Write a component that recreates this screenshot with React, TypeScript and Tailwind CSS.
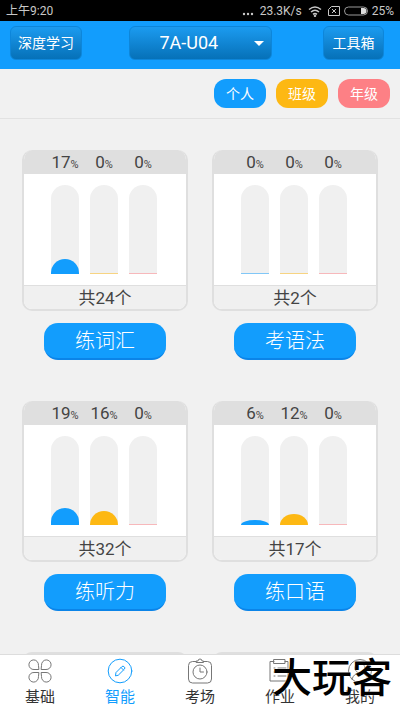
import React from "react";

type Card = { title: string; count: number; values: number[] };

const cards: Card[] = [
  { title: "练词汇", count: 24, values: [17, 0, 0] },
  { title: "考语法", count: 2, values: [0, 0, 0] },
  { title: "练听力", count: 32, values: [19, 16, 0] },
  { title: "练口语", count: 17, values: [6, 12, 0] },
];

const fills = ["bg-[#129dfd]", "bg-[#fdb813]", "bg-[#fd8085]"];
const headerButton =
  "h-[34px] rounded-md border border-[#0d86da] bg-linear-to-b from-[#1b9bf0] to-[#0671b8] text-white";

function Bar({ value, fill }: { value: number; fill: string }) {
  const height = Math.max(1, Math.round(value * 0.89));
  return (
    <div className="flex h-[89px] w-7 items-end overflow-hidden rounded-t-full bg-[#f0f0f0]">
      <div
        className={`w-full ${fill} ${value === 0 ? "opacity-50" : ""}`}
        style={{
          height,
          borderRadius: value === 0 ? 0 : `14px 14px 0 0 / ${Math.min(height, 14)}px ${Math.min(height, 14)}px 0 0`,
        }}
      />
    </div>
  );
}

function StatCard({ card }: { card: Card }) {
  return (
    <section className="flex flex-col items-center">
      <div className="w-full overflow-hidden rounded-[10px] border-2 border-t-0 border-[#dfdfdf] bg-white">
        <div className="flex h-6 justify-center gap-[11px] bg-[#dfdfdf] pr-0.5">
          {card.values.map((v, i) => (
            <span key={i} className="w-7 text-center text-[17px] leading-6 whitespace-nowrap text-[#444]">
              {v}
              <span className="text-[11px]">%</span>
            </span>
          ))}
        </div>
        <div className="flex h-[111px] justify-center gap-[11px] pt-[11px] pr-0.5">
          {card.values.map((v, i) => (
            <Bar key={i} value={v} fill={fills[i]} />
          ))}
        </div>
        <p className="h-6 border-t border-[#dfdfdf] bg-[#f0f0f0] text-center text-[17px] leading-6 text-[#444]">
          共{card.count}个
        </p>
      </div>
      <button className="mt-3 h-[37px] w-[122px] rounded-[14px] border-b-2 border-[#0b84e8] bg-[#129dfd] text-xl font-light text-white">
        {card.title}
      </button>
    </section>
  );
}

function NavIcon({ name }: { name: string }) {
  return (
    <svg className="size-7" viewBox="0 0 28 28" fill="none" stroke="currentColor" strokeWidth="1" strokeLinecap="round" strokeLinejoin="round">
      {name === "base" && (
        <>
          <path d="M12.500 12.500H8a4.800 4.800 0 1 1 4.500-4.500Z" />
          <path d="M15.500 12.500H20a4.800 4.800 0 1 0-4.500-4.500Z" />
          <path d="M12.500 15.500H8a4.800 4.800 0 1 0 4.500 4.500Z" />
          <path d="M15.500 15.500H20a4.800 4.800 0 1 1-4.500 4.500Z" />
        </>
      )}
      {name === "smart" && (
        <>
          <circle cx="14" cy="14" r="11.800" />
          <path d="M9.500 18.500 10 15.500l6-6q1-.8 2.200.3t.3 2.200l-6 6ZM15 10.500l2.500 2.500" />
        </>
      )}
      {name === "exam" && (
        <>
          <path d="M10 4.500H6.500a4 4 0 0 0-4 4V22a4 4 0 0 0 4 4h15a4 4 0 0 0 4-4V8.500a4 4 0 0 0-4-4H18" />
          <path d="M10.500 5.500h7V4h-1.500a2 2 0 0 0-4 0h-1.500Z" />
          <circle cx="14" cy="15" r="7" />
          <path d="M14 11v4h3.500" />
        </>
      )}
      {name === "homework" && (
        <>
          <path d="M8 4.500H4V24h18V4.500h-3M8 2.500h11v4H8Z" />
          <path d="M8 11h1M12 11h8M8 15h1M12 15h8M8 19h1M12 19h8" />
        </>
      )}
      {name === "me" && (
        <>
          <circle cx="14" cy="14" r="11.500" />
          <circle cx="14" cy="11" r="5" />
          <path d="M6 22q2-6 8-6t8 6" />
        </>
      )}
    </svg>
  );
}

const nav = [
  { label: "基础", icon: "base" },
  { label: "智能", icon: "smart" },
  { label: "考场", icon: "exam" },
  { label: "作业", icon: "homework" },
  { label: "我的", icon: "me" },
];

export default function App() {
  return (
    <div className="relative flex h-screen flex-col overflow-hidden bg-[#f1f1f1] font-[Roboto,'Noto_Sans_CJK_SC',sans-serif]">
      <div className="flex h-[21px] shrink-0 items-center justify-between bg-black px-1.5 text-xs text-[#c8c8c8]">
        <span>上午9:20</span>
        <div className="flex items-center gap-1">
          <svg className="mr-0.5 h-3 w-3" viewBox="0 0 12 12" fill="currentColor">
            <circle cx="2" cy="9" r="1.200" /><circle cx="6" cy="9" r="1.200" /><circle cx="10" cy="9" r="1.200" />
          </svg>
          <span>23.3K/s</span>
          <svg className="mx-0.5 h-3 w-3.5" viewBox="0 0 14 12" fill="none" stroke="currentColor" strokeWidth="1.500">
            <path d="M1 4.500q6-5 12 0M3 7q4-3.500 8 0M5 9.300q2-1.600 4 0" /><circle cx="7" cy="10.800" r=".5" />
          </svg>
          <svg className="h-3 w-3" viewBox="0 0 12 12" fill="none" stroke="currentColor">
            <path d="M3.500 1.500h8v9H.5v-6ZM4 4l4 4M8 4 4 8" />
          </svg>
          <svg className="h-2.5 w-6" viewBox="0 0 24 10">
            <rect x=".5" y="1" width="23" height="8" rx="4" fill="none" stroke="#999" />
            <path d="M17 2h2.500a3 3 0 0 1 0 6H17Z" fill="#ddd" />
          </svg>
          <span>25%</span>
        </div>
      </div>

      <header className="grid h-12 shrink-0 grid-cols-[1fr_auto_1fr] items-center bg-[#129dfd] pr-4 pb-1 pl-4">
        <button className={`${headerButton} -ml-1.5 w-[72px] text-sm`}>深度学习</button>
        <div className="relative">
          <select aria-label="单元" className={`${headerButton} w-[143px] appearance-none pl-[30px] text-lg`}>
            <option>7A-U04</option>
          </select>
          <svg className="pointer-events-none absolute top-[15px] right-2 h-[5px] w-2.5" viewBox="0 0 10 5" fill="#fff"><path d="M0 0h10L5 5Z" /></svg>
        </div>
        <button className={`${headerButton} w-[61px] justify-self-end text-sm`}>工具箱</button>
      </header>

      <div className="flex h-[50px] shrink-0 items-center justify-end gap-2.5 border-b border-[#e2e2e2] pr-2.5 text-sm text-white">
        <button className="h-[29px] w-[52px] rounded-xl bg-[#129dfd]">个人</button>
        <button className="h-[29px] w-[52px] rounded-xl bg-[#fdb813]">班级</button>
        <button className="h-[29px] w-[52px] rounded-xl bg-[#fd8085]">年级</button>
      </div>

      <main className="min-h-0 flex-1 overflow-hidden px-[22px] pt-[31px]">
        <div className="grid grid-cols-2 gap-x-6 gap-y-[41px]">
          {cards.map((card) => (
            <StatCard key={card.title} card={card} />
          ))}
          <div className="h-6 rounded-t-[10px] bg-[#dfdfdf]" />
          <div className="h-6 rounded-t-[10px] bg-[#dfdfdf]" />
        </div>
      </main>

      <nav className="grid h-[57px] shrink-0 grid-cols-5 border-t border-[#ddd] bg-white">
        {nav.map((n) => (
          <a key={n.label} href="#" className={`flex flex-col items-center pt-0.5 ${n.icon === "smart" ? "text-[#129dfd]" : "text-[#777]"}`}>
            <NavIcon name={n.icon} />
            <span className={`text-[15px] leading-6 ${n.icon === "smart" ? "" : "text-[#333]"}`}>{n.label}</span>
          </a>
        ))}
      </nav>
      <span className="pointer-events-none absolute right-2 bottom-3 text-[40px] leading-10 font-medium text-black [text-shadow:0_0_2px_#fff]">大玩客</span>
    </div>
  );
}
